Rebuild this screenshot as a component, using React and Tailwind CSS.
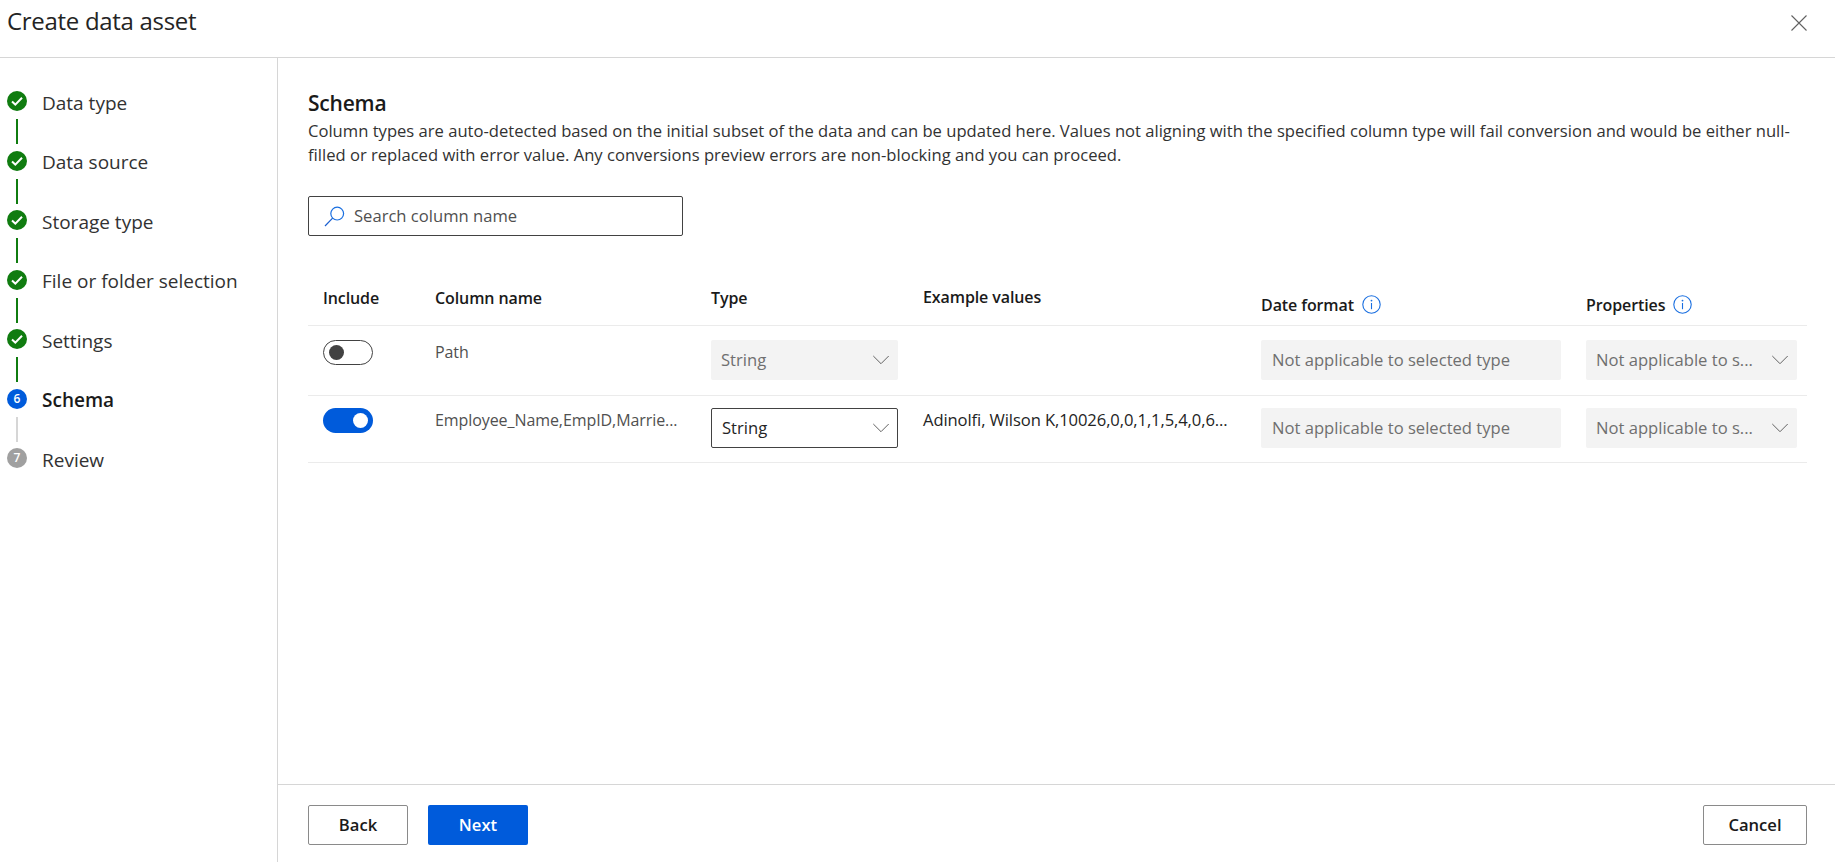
import React from 'react';

const steps = [
  { label: 'Data type', state: 'done' },
  { label: 'Data source', state: 'done' },
  { label: 'Storage type', state: 'done' },
  { label: 'File or folder selection', state: 'done' },
  { label: 'Settings', state: 'done' },
  { label: 'Schema', state: 'current', num: 6 },
  { label: 'Review', state: 'todo', num: 7 },
];

const Chevron = ({ color = '#616161' }) => (
  <svg width="16" height="16" viewBox="0 0 16 16" fill="none" className="shrink-0">
    <path d="M.3 4 8 11.7 15.7 4" stroke={color} strokeWidth="1" />
  </svg>
);

const InfoIcon = () => (
  <svg width="19" height="19" viewBox="0 0 19 19" fill="none" className="shrink-0">
    <circle cx="9.5" cy="9.5" r="8.7" stroke="#1a6fe0" strokeWidth="1.1" />
    <circle cx="9.5" cy="5.6" r="0.9" fill="#1a6fe0" />
    <path d="M9.5 8v6.2" stroke="#1a6fe0" strokeWidth="1.1" />
  </svg>
);

const StepIcon = ({ step }) => {
  if (step.state === 'done') {
    return (
      <svg width="20" height="20" viewBox="0 0 20 20" className="shrink-0">
        <circle cx="10" cy="10" r="10" fill="#107c10" />
        <path d="M5 10.6 8.3 13.6 15 6.8" fill="none" stroke="#fff" strokeWidth="2" />
      </svg>
    );
  }
  return (
    <div
      className={`w-5 h-5 shrink-0 rounded-full flex items-center justify-center text-white text-[12px] font-semibold ${
        step.state === 'current' ? 'bg-[#005bdb]' : 'bg-[#a0a0a0]'
      }`}
    >
      {step.num}
    </div>
  );
};

const Toggle = ({ on }) =>
  on ? (
    <div className="w-[50px] h-[25px] rounded-full bg-[#005bdb] flex items-center justify-end pr-[5px]">
      <div className="w-[15px] h-[15px] rounded-full bg-white" />
    </div>
  ) : (
    <div className="w-[50px] h-[25px] rounded-full border border-[#424242] flex items-center pl-[5px]">
      <div className="w-[15px] h-[15px] rounded-full bg-[#424242]" />
    </div>
  );

const Row = ({ on, name, typeEnabled, example, rowClass }) => (
  <div
    className={`grid grid-cols-[112px_276px_212px_338px_325px_1fr] pl-[15px] border-b border-[#ebebeb] ${rowClass}`}
  >
    <Toggle on={on} />
    <div className="text-[16px] tracking-[-0.08px] text-[#505050] leading-6">{name}</div>
    {typeEnabled ? (
      <div className="w-[187px] h-10 rounded-[2px] border border-[#424242] text-[#242424] flex items-center justify-between pl-[10px] pr-[8px]">
        <span>String</span>
        <Chevron />
      </div>
    ) : (
      <div className="w-[187px] h-10 rounded-[2px] bg-[#f3f3f3] text-[#6f6f6f] flex items-center justify-between pl-[10px] pr-[9px]">
        <span>String</span>
        <Chevron />
      </div>
    )}
    <div className="text-[#242424] leading-6 tracking-[-0.1px]">{example}</div>
    <div className="w-[300px] h-10 rounded-[2px] bg-[#f3f3f3] text-[#6f6f6f] flex items-center pl-[11px]">
      Not applicable to selected type
    </div>
    <div className="w-[211px] h-10 rounded-[2px] bg-[#f3f3f3] text-[#6f6f6f] flex items-center justify-between pl-[10px] pr-[9px]">
      <span>Not applicable to s...</span>
      <Chevron />
    </div>
  </div>
);

const OutlineButton = ({ children, width }) => (
  <button className={`${width} h-10 rounded-[2px] border border-[#8a8a8a] bg-white text-[#1a1a1a] font-semibold`}>
    {children}
  </button>
);

export default function App() {
  return (
    <div
      className="h-[862px] w-[1835px] bg-white flex flex-col overflow-hidden text-[16.6px] text-[#242424]"
      style={{ fontFamily: '"Open Sans", "Noto Sans", sans-serif' }}
    >
      <header className="h-[58px] shrink-0 border-b border-[#d6d6d6] flex items-start justify-between pl-[7px] pr-[28px]">
        <h1 className="text-[24px] tracking-[-0.3px] leading-[42px] font-normal text-[#242424]">Create data asset</h1>
        <svg width="16" height="16" viewBox="0 0 16 16" fill="none" className="mt-[15px]">
          <path d="M.5.5l15 15M15.5.5l-15 15" stroke="#616161" strokeWidth="1.1" />
        </svg>
      </header>

      <div className="flex flex-1 min-h-0">
        <nav className="w-[278px] shrink-0 border-r border-[#d6d6d6] pt-[33px] pl-[7px]">
          {steps.map((step, idx) => (
            <div key={step.label} className="h-[59.5px]">
              <div className="flex items-center gap-4 h-5">
                <StepIcon step={step} />
                <span
                  className={`text-[19px] leading-6 mt-[3px] -ml-[1px] ${
                    step.state === 'current' ? 'font-semibold text-[#1a1a1a]' : 'text-[#323232]'
                  }`}
                >
                  {step.label}
                </span>
              </div>
              {idx < steps.length - 1 && (
                <div
                  className={`w-[2px] h-[25px] mt-2 ml-[9px] ${
                    step.state === 'done' ? 'bg-[#107c10]' : 'bg-[#d6d6d6]'
                  }`}
                />
              )}
            </div>
          ))}
        </nav>

        <main className="flex-1 min-w-0 flex flex-col">
          <div className="flex-1 pl-[30px] pr-[28px] pt-[30px]">
            <h2 className="text-[21px] leading-[30px] font-semibold tracking-[-0.2px] text-[#1a1a1a]">Schema</h2>
            <p className="leading-6 text-[#323232] mt-[1px]">
              Column types are auto-detected based on the initial subset of the data and can be updated here. Values not aligning with the specified column type will fail conversion and would be either null-filled or replaced with error value. Any conversions preview errors are non-blocking and you can proceed.
            </p>

            <div className="mt-[29px] w-[375px] h-10 rounded-[2px] border border-[#424242] flex items-center gap-[9px] pl-[15px]">
              <svg width="21" height="21" viewBox="0 0 21 21" fill="none" className="shrink-0">
                <circle cx="13.2" cy="7.6" r="6.4" stroke="#1a6fe0" strokeWidth="1.2" />
                <path d="M8.6 12.2 1 20" stroke="#1a5fd0" strokeWidth="1.2" />
              </svg>
              <span className="text-[#505050]">Search column name</span>
            </div>

            <div className="mt-[34px] h-[56px] grid grid-cols-[112px_276px_212px_338px_325px_1fr] pl-[15px] border-b border-[#ebebeb] font-semibold text-[#1a1a1a] text-[16px] tracking-[-0.1px] leading-5">
              <div className="pt-[18px]">Include</div>
              <div className="pt-[18px]">Column name</div>
              <div className="pt-[18px]">Type</div>
              <div className="pt-[17px]">Example values</div>
              <div className="pt-[25px] flex items-start gap-[8px]">
                Date format <InfoIcon />
              </div>
              <div className="pt-[25px] flex items-start gap-[8px]">
                Properties <InfoIcon />
              </div>
            </div>
            <Row name="Path" example="" rowClass="h-[70px] pt-[14px]" />
            <Row on typeEnabled name="Employee_Name,EmpID,Marrie..." example="Adinolfi, Wilson K,10026,0,0,1,1,5,4,0,6..." rowClass="h-[67px] pt-[12px]" />
          </div>

          <footer className="h-[78px] shrink-0 border-t border-[#d6d6d6] flex items-center justify-between pl-[30px] pr-[28px] pt-[3px]">
            <div className="flex items-center gap-5">
              <OutlineButton width="w-[100px]">Back</OutlineButton>
              <button className="w-[100px] h-10 rounded-[2px] bg-[#005bdb] text-white font-semibold">Next</button>
            </div>
            <OutlineButton width="w-[104px]">Cancel</OutlineButton>
          </footer>
        </main>
      </div>
    </div>
  );
}
